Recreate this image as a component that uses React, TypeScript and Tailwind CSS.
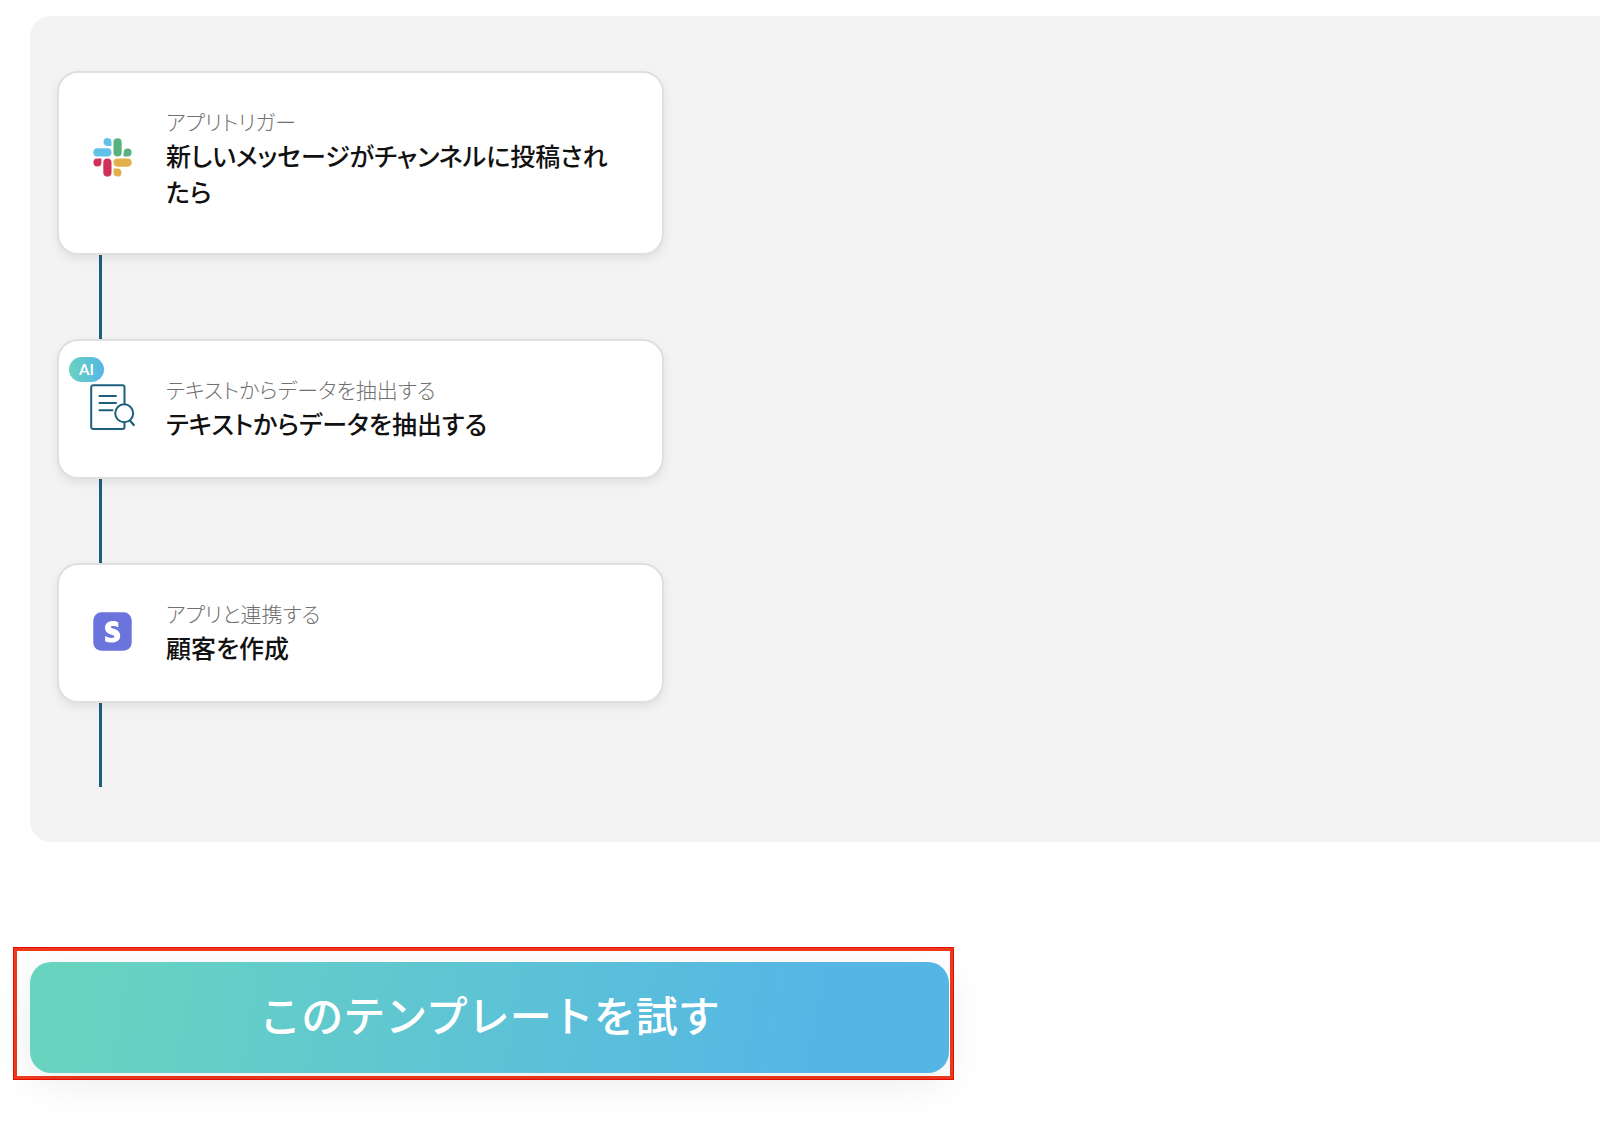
import type { ReactNode } from "react";

function SlackIcon() {
  return (
    <svg viewBox="0 0 39 39" className="size-[39px]" aria-hidden="true">
      <g fill="#63c1e8">
        <path d="M18.5 8H14.3A4 4 0 1 1 18.5 4Z" />
        <rect x="0.3" y="10.3" width="18.2" height="8.2" rx="4.1" />
      </g>
      <g fill="#57b280">
        <rect x="20.5" y="0.3" width="8.2" height="18.2" rx="4.1" />
        <path d="M30.6 18.5V14.3A4 4 0 1 1 34.6 18.5Z" />
      </g>
      <g fill="#e2b04a">
        <rect x="20.5" y="20.5" width="18.2" height="8.2" rx="4.1" />
        <path d="M20.5 30.6H24.7A4 4 0 1 1 20.5 34.6Z" />
      </g>
      <g fill="#cf3159">
        <path d="M8.4 20.5V24.7A4 4 0 1 1 4.3 20.5Z" />
        <rect x="10.3" y="20.5" width="8.2" height="18.2" rx="4.1" />
      </g>
    </svg>
  );
}

function ExtractIcon() {
  return (
    <svg
      viewBox="0 0 46 48"
      className="h-12 w-[46px]"
      fill="none"
      stroke="#1d5f7d"
      strokeWidth="2"
      strokeLinecap="round"
      aria-hidden="true"
    >
      <path d="M35.5 20V3.2A2 2 0 0 0 33.5 1.2H4.2A2 2 0 0 0 2.2 3.2V43A2 2 0 0 0 4.2 45H33.5A2 2 0 0 0 35.5 43V38.5" />
      <path d="M10.5 12H27M10.5 19H27M10.5 26.2H23.5" />
      <circle cx="35.2" cy="29.3" r="9" />
      <path d="M41.3 37L44.8 41" strokeWidth="2.2" />
    </svg>
  );
}

function StripeIcon() {
  return (
    <svg viewBox="0 0 39 39" className="size-[39px]" aria-hidden="true">
      <rect x="0.3" y="0.3" width="38.4" height="38.4" rx="8" fill="#6b73dc" />
      <path
        fill="#fff"
        d="M25.3 10.4V15.3C23.5 14.4 21.9 13.9 20.2 13.9C18.7 13.9 17.7 14.3 17.7 15.1C17.7 17.1 27.2 16.5 27.2 23.8C27.2 28.3 23.8 30.6 19 30.6C16.7 30.6 14.4 30.2 12.1 29.2V24C14.2 25.2 16.8 26 19 26C20.6 26 21.5 25.6 21.5 24.6C21.5 22.2 12 23 12 15.9C12 11.6 15.3 9 20 9C21.9 9 23.7 9.4 25.3 10.4Z"
      />
    </svg>
  );
}

type StepProps = {
  icon: ReactNode;
  label: string;
  title: string;
  badge?: string;
  className?: string;
};

function Step({ icon, label, title, badge, className = "pb-9" }: StepProps) {
  return (
    <li>
      <article
        className={`relative flex max-w-[607px] items-center gap-[31px] rounded-[21px] border-2 border-[#dfdfdf] bg-white pt-[33px] pr-9 pl-[30px] shadow-[0_4px_10px_rgba(0,0,0,0.08)] ${className}`}
      >
        {badge && (
          <span className="absolute top-4 left-[10px] flex h-[25px] w-[35px] items-center justify-center rounded-full bg-linear-to-r from-[#68d2c0] to-[#55b6e6] font-['Lato',sans-serif] text-[15px] font-bold text-white">
            {badge}
          </span>
        )}
        <div className="flex w-[46px] shrink-0 justify-center">{icon}</div>
        <div className="min-w-0">
          <p className="text-[21px] leading-[31px] font-light text-[#707070]">{label}</p>
          <h2 className="text-[25px] leading-9 font-medium text-[#111]">{title}</h2>
        </div>
      </article>
      <div className="ml-[42px] h-[84px] w-[3px] bg-[#1b5f7c]" />
    </li>
  );
}

export default function App() {
  return (
    <main
      lang="ja"
      className="min-h-screen bg-white pt-4 pb-8 font-['Noto_Sans_CJK_JP',sans-serif]"
    >
      <section className="ml-[30px] rounded-l-[21px] bg-[#f3f3f3] pt-[55px] pr-7 pb-[55px] pl-[27px] [font-feature-settings:'palt']">
        <ol>
          <Step
            icon={<SlackIcon />}
            label="アプリトリガー"
            title="新しいメッセージがチャンネルに投稿されたら"
            className="pb-11"
          />
          <Step
            icon={<ExtractIcon />}
            label="テキストからデータを抽出する"
            title="テキストからデータを抽出する"
            badge="AI"
          />
          <Step icon={<StripeIcon />} label="アプリと連携する" title="顧客を作成" />
        </ol>
      </section>

      <div className="mt-[105px] ml-[13px] max-w-[941px] border-4 border-[#ee3a1c] pt-[11px] pr-px pb-[3px] pl-[13px] outline-1 -outline-offset-1 outline-[#e80c00]">
        <button
          type="button"
          className="h-[111px] w-full rounded-[21px] bg-linear-[100deg,#68d4c0_5%,#55b6e5_85%] pb-2 text-[42px] leading-none font-medium text-white shadow-[0_10px_40px_rgba(0,0,0,0.08)]"
        >
          このテンプレートを試す
        </button>
      </div>
    </main>
  );
}
